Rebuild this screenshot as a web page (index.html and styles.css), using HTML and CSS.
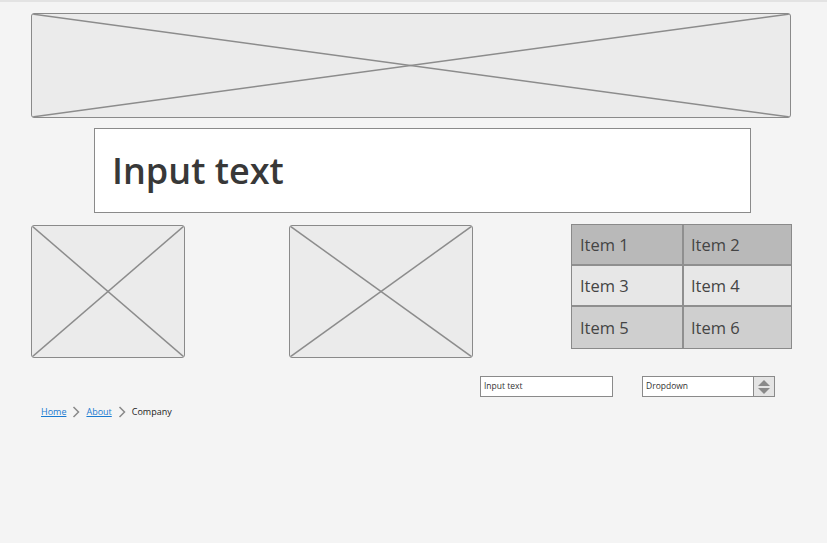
FILE: index.html
```html
<!DOCTYPE html>
<html>
<head>
<meta charset="utf-8">
<link rel="stylesheet" href="styles.css">
</head>
<body>
<div class="page">
  <div class="ph ph-banner">
    <svg class="x" viewBox="0 0 100 100" preserveAspectRatio="none"><line x1="0" y1="0" x2="100" y2="100" vector-effect="non-scaling-stroke"/><line x1="100" y1="0" x2="0" y2="100" vector-effect="non-scaling-stroke"/></svg>
  </div>
  <div class="title-box"><span class="title">Input text</span></div>
  <div class="row3">
    <div class="ph ph-a">
      <svg class="x" viewBox="0 0 100 100" preserveAspectRatio="none"><line x1="0" y1="0" x2="100" y2="100" vector-effect="non-scaling-stroke"/><line x1="100" y1="0" x2="0" y2="100" vector-effect="non-scaling-stroke"/></svg>
    </div>
    <div class="ph ph-b">
      <svg class="x" viewBox="0 0 100 100" preserveAspectRatio="none"><line x1="0" y1="0" x2="100" y2="100" vector-effect="non-scaling-stroke"/><line x1="100" y1="0" x2="0" y2="100" vector-effect="non-scaling-stroke"/></svg>
    </div>
    <div class="grid">
      <div class="cell r1">Item 1</div><div class="cell r1 c2">Item 2</div>
      <div class="cell r2">Item 3</div><div class="cell r2 c2">Item 4</div>
      <div class="cell r3">Item 5</div><div class="cell r3 c2">Item 6</div>
    </div>
  </div>
  <div class="row4">
    <div class="field">Input text</div>
    <div class="dropdown">
      <span class="dd-label">Dropdown</span>
      <span class="dd-btn">
        <svg width="14" height="16" viewBox="0 0 14 16"><polygon points="7,1 13,7 1,7" fill="#8a8a8a"/><polygon points="1,9 13,9 7,15" fill="#8a8a8a"/></svg>
      </span>
    </div>
  </div>
  <nav class="crumbs">
    <a class="crumb-link">Home</a>
    <svg class="chev" width="8" height="12" viewBox="0 0 8 12"><polyline points="1.5,1 6.5,6 1.5,11" fill="none" stroke="#8a8a8a" stroke-width="1.5"/></svg>
    <a class="crumb-link">About</a>
    <svg class="chev" width="8" height="12" viewBox="0 0 8 12"><polyline points="1.5,1 6.5,6 1.5,11" fill="none" stroke="#8a8a8a" stroke-width="1.5"/></svg>
    <span class="crumb-cur">Company</span>
  </nav>
</div>
</body>
</html>
```
FILE: styles.css
```css
html, body {
  margin: 0;
  padding: 0;
}
body {
  background: #f4f4f4;
  border-top: 2px solid #e3e3e3;
  font-family: "Open Sans", Lato, sans-serif;
  height: 541px;
  overflow: hidden;
}
.page {
  padding-left: 31px;
  width: 770px;
}
.ph {
  position: relative;
  box-sizing: border-box;
  background: #ebebeb;
  border: 1.5px solid #8a8a8a;
  border-radius: 3px;
  overflow: hidden;
}
.x {
  display: block;
  width: 100%;
  height: 100%;
}
.x line {
  stroke: #8c8c8c;
  stroke-width: 1.5;
}
.ph-banner {
  margin-top: 11px;
  width: 760px;
  height: 105px;
}
.title-box {
  box-sizing: border-box;
  margin-top: 10px;
  margin-left: 63px;
  width: 657px;
  height: 85px;
  background: #fff;
  border: 1px solid #8a8a8a;
  display: flex;
  align-items: center;
  padding-left: 17px;
}
.title {
  font-size: 36px;
  font-weight: 600;
  color: #383838;
}
.row3 {
  display: flex;
  align-items: flex-start;
  margin-top: 11px;
}
.ph-a {
  margin-top: 1px;
  width: 154px;
  height: 133px;
}
.ph-b {
  margin-top: 1px;
  margin-left: 104px;
  width: 184px;
  height: 133px;
}
.grid {
  margin-left: 98px;
  box-sizing: border-box;
  width: 221px;
  display: grid;
  grid-template-columns: 110px 109px;
  border: 1px solid #8a8a8a;
}
.cell {
  box-sizing: border-box;
  height: 41px;
  display: flex;
  align-items: center;
  padding-left: 8px;
  font-size: 16.5px;
  color: #444;
  border-bottom: 2px solid #8f8f8f;
}
.cell.r3 {
  border-bottom: 0;
}
.cell.c2 {
  border-left: 2px solid #8f8f8f;
  padding-left: 7px;
}
.r1 { background: #b9b9b9; }
.r2 { background: #e7e7e7; }
.r3 { background: #cfcfcf; }
.row4 {
  display: flex;
  margin-top: 18px;
  margin-left: 449px;
}
.field, .dropdown {
  box-sizing: border-box;
  width: 133px;
  height: 21px;
  background: #fff;
  border: 1px solid #8a8a8a;
  font-size: 8.5px;
  color: #333;
}
.field {
  padding: 3px 0 0 3px;
}
.dropdown {
  margin-left: 29px;
  display: flex;
}
.dd-label {
  flex: 1;
  padding: 3px 0 0 3px;
}
.dd-btn {
  width: 20px;
  background: #e4e4e4;
  border-left: 1px solid #8a8a8a;
  display: flex;
  align-items: center;
  justify-content: center;
}
.crumbs {
  display: flex;
  align-items: center;
  margin-top: 7px;
  margin-left: 10px;
  height: 14px;
  font-size: 9px;
}
.crumb-link {
  color: #1a7ad0;
  text-decoration: underline;
}
.chev {
  margin: 0 6px 0 6px;
  position: relative;
  top: 1px;
}
.crumb-cur {
  color: #222;
}
```
